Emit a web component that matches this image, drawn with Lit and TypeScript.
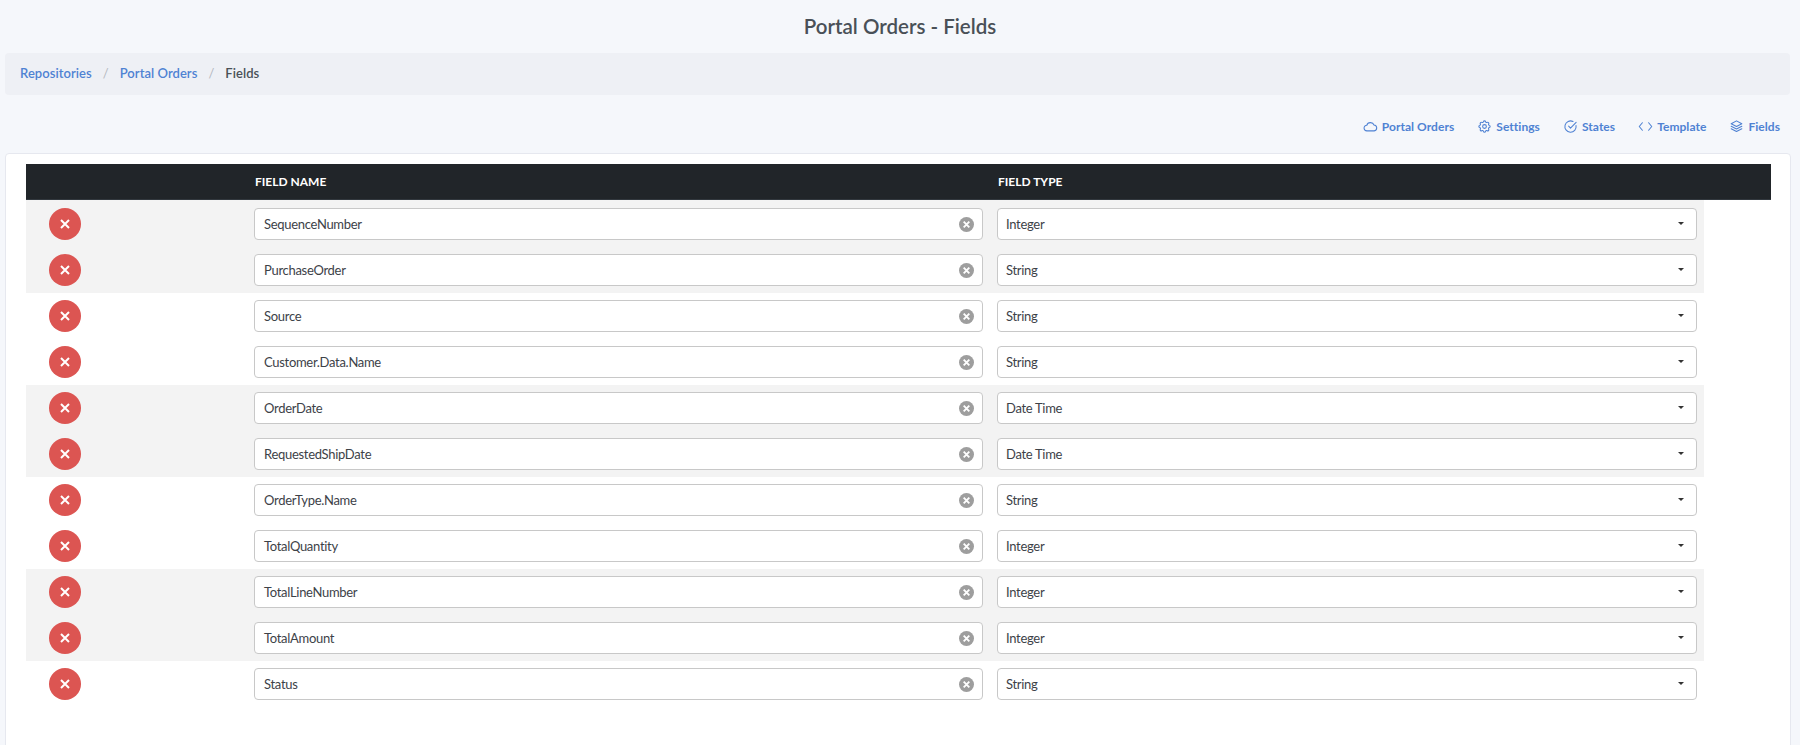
import { LitElement, html, css, svg } from "lit";
import { customElement } from "lit/decorators.js";

const rows: [string, string][] = [
  ["SequenceNumber", "Integer"],
  ["PurchaseOrder", "String"],
  ["Source", "String"],
  ["Customer.Data.Name", "String"],
  ["OrderDate", "Date Time"],
  ["RequestedShipDate", "Date Time"],
  ["OrderType.Name", "String"],
  ["TotalQuantity", "Integer"],
  ["TotalLineNumber", "Integer"],
  ["TotalAmount", "Integer"],
  ["Status", "String"],
];

const icons = {
  cloud: svg`<path d="M6.7 19a4.7 4.5 0 0 1-.6-9A6 5.5 0 0 1 17.6 9.5 4.8 4.8 0 0 1 18 19z"/>`,
  gear: svg`<path d="M10.3 4.3c.4-1.8 3-1.8 3.4 0a1.7 1.7 0 0 0 2.6 1.1c1.5-.9 3.3.8 2.4 2.4a1.7 1.7 0 0 0 1 2.5c1.8.4 1.8 3 0 3.4a1.7 1.7 0 0 0-1 2.6c.9 1.5-.9 3.3-2.4 2.4a1.7 1.7 0 0 0-2.6 1c-.4 1.8-3 1.8-3.4 0a1.7 1.7 0 0 0-2.6-1c-1.5.9-3.3-.9-2.4-2.4a1.7 1.7 0 0 0-1-2.6c-1.8-.4-1.8-3 0-3.4a1.7 1.7 0 0 0 1-2.5c-.9-1.6.9-3.3 2.4-2.4 1 .6 2.3.1 2.6-1.1z"/><circle cx="12" cy="12" r="3"/>`,
  check: svg`<path d="M20.9 10.6A9 9 0 1 1 16 4"/><path d="M9 11.5l3 3L21 5.5"/>`,
  code: svg`<path d="M7 6l-5 6 5 6M17 6l5 6-5 6"/>`,
  layers: svg`<path d="M12 3L3.5 7.5 12 12 20.5 7.5z"/><path d="M3.5 11.5L12 16 20.5 11.5"/><path d="M3.5 15.5L12 20 20.5 15.5"/>`,
};

const nav: [string, keyof typeof icons][] = [
  ["Portal Orders", "cloud"],
  ["Settings", "gear"],
  ["States", "check"],
  ["Template", "code"],
  ["Fields", "layers"],
];

@customElement("app-root")
export class AppRoot extends LitElement {
  static styles = css`
    :host {
      display: block;
      height: 745px;
      overflow: hidden;
      background: #f5f7fb;
      font-family: "Lato", "Noto Sans", sans-serif;
      color: #3d4248;
    }
    .title {
      margin: 0;
      height: 53px;
      display: flex;
      align-items: center;
      justify-content: center;
      padding-bottom: 2px;
      font-size: 20.5px;
      font-weight: 600;
      color: #495057;
      box-sizing: border-box;
    }
    .crumbs {
      margin: 0 10px 0 5px;
      height: 42px;
      padding: 0 0 2px 15px;
      box-sizing: border-box;
      background: #eef0f5;
      border-radius: 4px;
      display: flex;
      align-items: center;
      font-size: 13px;
      font-weight: 600;
      letter-spacing: 0.05px;
    }
    .crumbs a { color: #4f82d3; }
    .crumbs .sep { color: #b4b8bf; margin: 0 11px; font-weight: 400; }
    .crumbs .cur { color: #495057; }
    .nav {
      height: 58px;
      display: flex;
      justify-content: flex-end;
      align-items: center;
      gap: 23px;
      padding: 4px 20px 0 0;
      box-sizing: border-box;
      font-size: 12px;
      font-weight: 700;
      letter-spacing: 0.05px;
      color: #4f82d3;
    }
    .nav span { display: flex; align-items: center; gap: 4px; }
    .nav svg { width: 15px; height: 15px; fill: none; stroke: currentColor; stroke-width: 1.7; stroke-linecap: round; stroke-linejoin: round; }
    .card {
      margin: 0 9px 0 5px;
      height: 600px;
      background: #fff;
      border: 1px solid #e6e8ef;
      border-radius: 4px;
      box-sizing: border-box;
      padding: 10px 19px 0 20px;
    }
    .head {
      height: 36px;
      padding-bottom: 1px;
      background: #212529;
      border-bottom: 1px solid #32383e;
      box-sizing: border-box;
      color: #fff;
      display: grid;
      grid-template-columns: 229px 743px 1fr;
      align-items: center;
      font-size: 12px;
      font-weight: 700;
    }
    .row {
      width: 1678px;
      height: 46px;
      display: grid;
      grid-template-columns: 228px 729px 14px 700px;
      align-items: center;
    }
    .row.first { height: 47px; padding-top: 1px; box-sizing: border-box; }
    .row.grey { background: #f3f3f3; }
    .del {
      width: 32px;
      height: 32px;
      border-radius: 50%;
      background: #dc5552;
      margin-left: 23px;
      display: flex;
      align-items: center;
      justify-content: center;
    }
    .del svg { width: 10px; height: 10px; stroke: #fff; stroke-width: 2; fill: none; }
    .field {
      height: 32px;
      box-sizing: border-box;
      background: #fff;
      border: 1px solid #c8c8c8;
      border-radius: 4px;
      display: flex;
      align-items: center;
      justify-content: space-between;
      padding: 0 8px 0 9px;
      font-size: 13px;
      letter-spacing: -0.3px;
      color: #3d4248;
    }
    .sel { grid-column: 4; padding-right: 12px; padding-left: 8px; }
    .clear { width: 15px; height: 15px; flex: none; }
    .caret {
      width: 0;
      height: 0;
      margin-bottom: 2px;
      border-left: 3.5px solid transparent;
      border-right: 3.5px solid transparent;
      border-top: 3.5px solid #333;
    }
  `;

  render() {
    return html`
      <h1 class="title">Portal Orders - Fields</h1>
      <div class="crumbs">
        <a>Repositories</a><span class="sep">/</span><a>Portal Orders</a><span class="sep">/</span><span class="cur">Fields</span>
      </div>
      <div class="nav">
        ${nav.map(
          ([t, i]) => html`<span><svg viewBox="0 0 24 24">${icons[i]}</svg>${t}</span>`
        )}
      </div>
      <div class="card">
        <div class="head"><div></div><div>FIELD NAME</div><div>FIELD TYPE</div></div>
        ${rows.map(
          ([name, type], i) => html`
            <div class="row ${i === 0 ? "first" : ""} ${Math.floor(i / 2) % 2 === 0 ? "grey" : ""}">
              <div class="del"><svg viewBox="0 0 10 10"><path d="M1 1l8 8M9 1l-8 8"/></svg></div>
              <div class="field">
                <span>${name}</span>
                <svg class="clear" viewBox="0 0 16 16">
                  <circle cx="8" cy="8" r="8" fill="#9e9e9e"/>
                  <path d="M5 5l6 6M11 5l-6 6" stroke="#fff" stroke-width="2"/>
                </svg>
              </div>
              <div class="field sel"><span>${type}</span><i class="caret"></i></div>
            </div>
          `
        )}
      </div>
    `;
  }
}
